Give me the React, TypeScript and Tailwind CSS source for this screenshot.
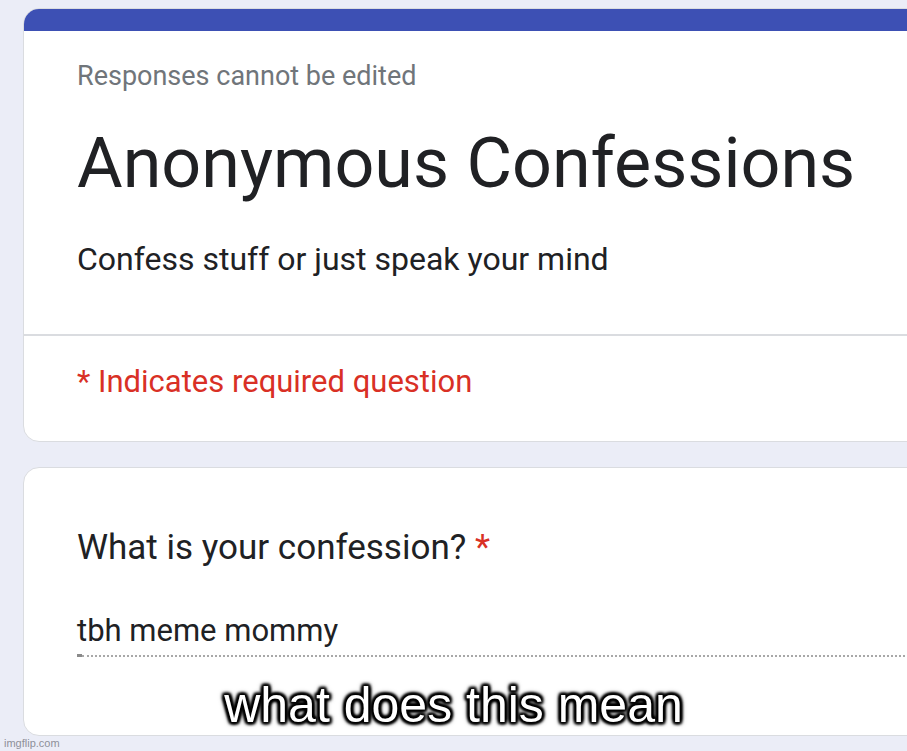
export default function App() {
  return (
    <div
      className="relative w-[907px] h-[751px] overflow-hidden bg-[#ebedf7]"
      style={{ fontFamily: "Roboto, 'Noto Sans', sans-serif" }}
    >
      <div className="flex flex-col pl-[23px] pt-[8px] gap-[25px] w-[1000px]">
        {/* header card */}
        <div className="h-[434px] rounded-[16px] overflow-hidden border border-[#dadce0] bg-white flex flex-col">
          <div className="h-[22px] bg-[#3d50b4] shrink-0" />
          <div className="flex flex-col px-[53px] pt-[30px]">
            <div className="text-[27px] leading-[30px] text-[#70757a]">Responses cannot be edited</div>
            <div className="mt-[32px] text-[70px] leading-[80px] text-[#202124]">Anonymous Confessions</div>
            <div className="mt-[36px] text-[32px] leading-[40px] text-[#202124]">Confess stuff or just speak your mind</div>
          </div>
          <div className="mt-[55px] border-t-2 border-[#dadce0]" />
          <div className="px-[53px] pt-[26px] text-[31px] leading-[40px] text-[#d93025]">* Indicates required question</div>
        </div>

        {/* question card */}
        <div className="h-[269px] rounded-[16px] border border-[#dadce0] bg-white flex flex-col px-[53px] pt-[60px]">
          <div className="text-[35px] leading-[40px] text-[#202124]">
            What is your confession? <span className="text-[#d93025]">*</span>
          </div>
          <div className="mt-[43px] w-[900px]">
            <div className="text-[31px] leading-[40px] text-[#202124]">tbh meme mommy</div>
            <div className="mt-[3px] flex items-center">
              <div className="w-[5px] h-[3px] bg-[#8a8a8a]" />
              <div className="flex-1 border-b-2 border-dotted border-[#a8a8a8]" />
            </div>
          </div>
        </div>
      </div>

      <div
        className="absolute left-0 right-0 top-[677px] text-center text-white text-[50px] leading-[56px]"
        style={{
          fontFamily: "'Liberation Sans', Arial, sans-serif",
          textShadow:
            "2px 2px 3px #000, -2px -2px 3px #000, 2px -2px 3px #000, -2px 2px 3px #000, 0 2px 3px #000, 0 -2px 3px #000, 2px 0 3px #000, -2px 0 3px #000, 0 0 6px #000",
        }}
      >
        what does this mean
      </div>

      <div
        className="absolute left-[4px] top-[736px] text-[11px] leading-[14px] text-[#8e9099]"
        style={{ fontFamily: "'Liberation Sans', Arial, sans-serif" }}
      >
        imgflip.com
      </div>
    </div>
  );
}
